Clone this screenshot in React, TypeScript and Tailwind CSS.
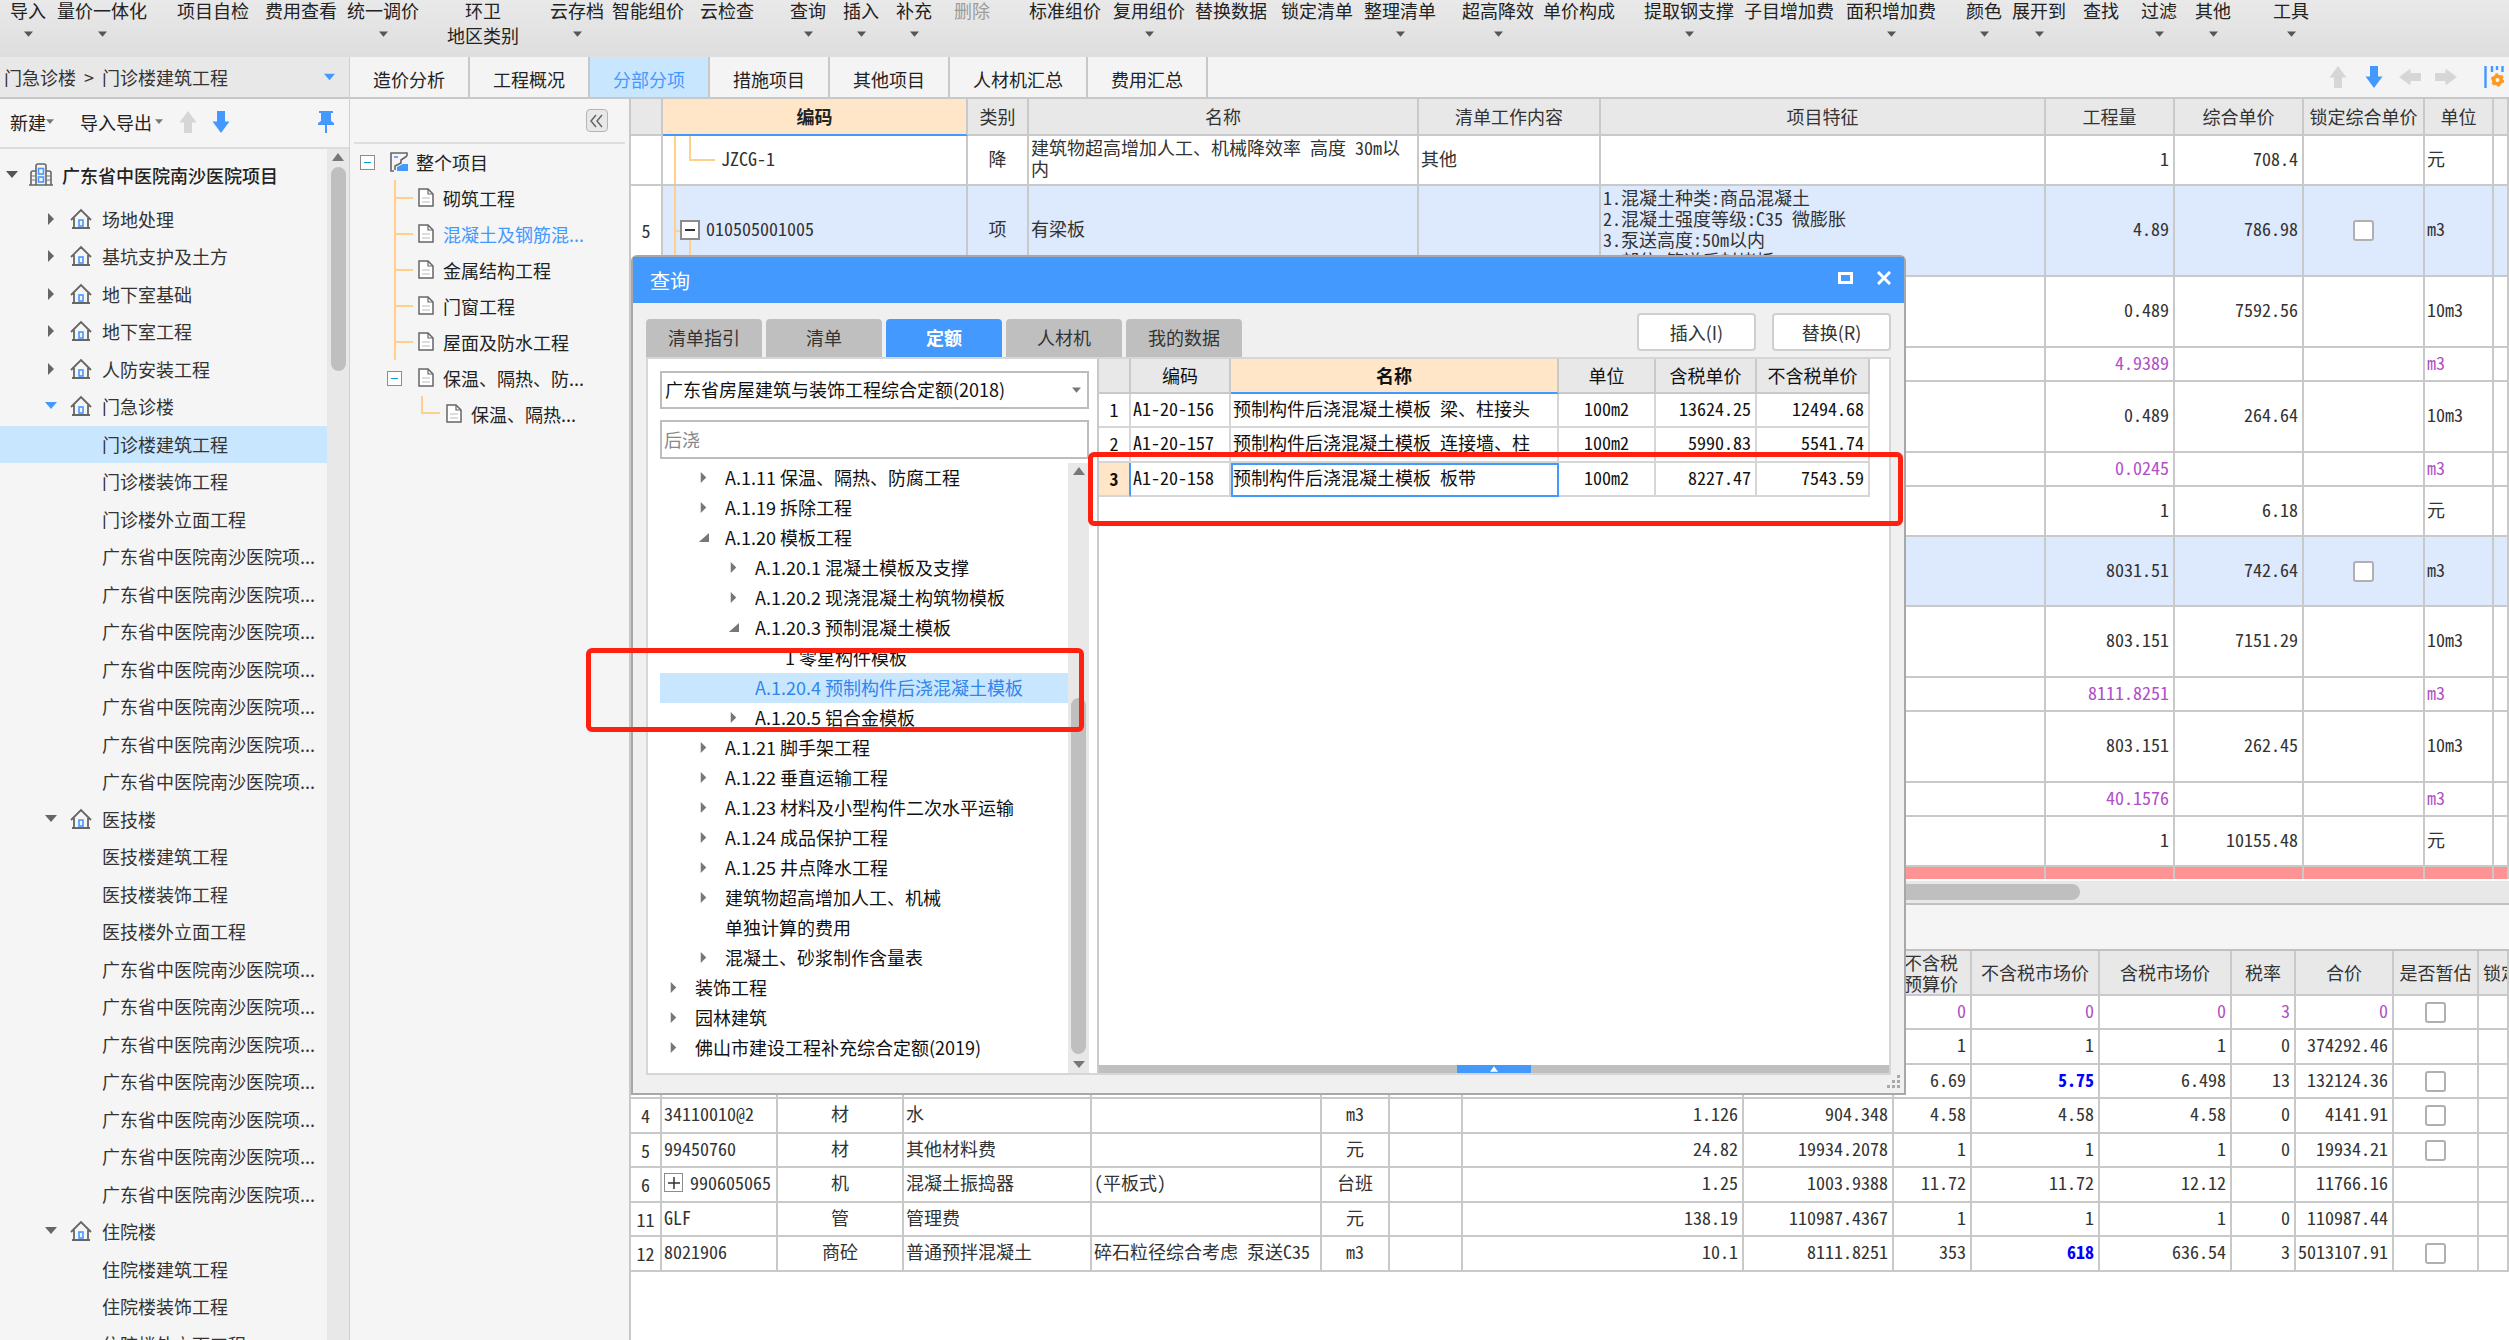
import type { ReactNode } from 'react';
import clsx from 'clsx';

// ---------- 图标 ----------

function Tri({ dir, className }: { dir: 'down' | 'right' | 'up' | 'corner'; className?: string }) {
  const points = {
    down: '0,2 12,2 6,9',
    up: '0,10 12,10 6,2',
    right: '3,0 9,6 3,12',
    corner: '12,1 12,11 1,11',
  }[dir];
  return (
    <svg viewBox="0 0 12 12" className={clsx('shrink-0 fill-current', className)} aria-hidden="true">
      <polygon points={points} />
    </svg>
  );
}

function Arrow({ className }: { className?: string }) {
  return (
    <svg viewBox="0 0 24 24" className={clsx('size-6 shrink-0 fill-current', className)} aria-hidden="true">
      <path d="M12 1 20.500 12.500H16V23H8V12.500H3.500Z" />
    </svg>
  );
}

function HouseIcon() {
  return (
    <svg viewBox="0 0 22 22" className="h-[22px] w-[22px] shrink-0" fill="none" aria-hidden="true">
      <path d="M1 12 11 2 21 12M4 10V20M18 10V20M2 20H20" stroke="#666" strokeWidth="1.8" />
      <rect x="9" y="12" width="4" height="6" stroke="#4499ff" strokeWidth="1.6" />
    </svg>
  );
}

function BuildingIcon() {
  return (
    <svg viewBox="0 0 24 24" className="size-6 shrink-0" fill="none" aria-hidden="true">
      <path d="M7 22V3Q7 1 9 1H15Q17 1 17 3V22M7 8H4Q2 8 2 10V22M17 8H20Q22 8 22 10V22M0 22H24" stroke="#666" strokeWidth="1.6" />
      <path d="M2 13H7M2 17H7M17 13H22M17 17H22" stroke="#777" strokeWidth="1.2" />
      <rect x="9.500" y="5.500" width="5" height="5.500" stroke="#4499ff" strokeWidth="1.6" />
      <rect x="9.500" y="14" width="5" height="5" stroke="#4499ff" strokeWidth="1.6" />
    </svg>
  );
}

function DocIcon() {
  return (
    <svg viewBox="0 0 16 20" className="h-5 w-4 shrink-0" fill="none" aria-hidden="true">
      <path d="M1 1H10L15 6V18H1Z" fill="#fff" stroke="#666" strokeWidth="1.5" />
      <path d="M10 1V6H15" stroke="#666" strokeWidth="1.2" />
      <path d="M4 10H12M4 14H12" stroke="#bbb" strokeWidth="1" />
    </svg>
  );
}

function ProjectIcon() {
  return (
    <svg viewBox="0 0 20 20" className="size-5 shrink-0" fill="none" aria-hidden="true">
      <path d="M18 4V1H2V19H5M18 4 12 8V11L6 14V18" stroke="#666" strokeWidth="1.6" />
      <path d="M5 5H9" stroke="#4499ff" strokeWidth="1.6" />
      <path d="M8 19V15L14 12H19V19Z" fill="#4499ff" />
    </svg>
  );
}

function PinIcon() {
  return (
    <svg viewBox="0 0 18 24" className="h-6 w-[18px] fill-[#4499ff]" aria-hidden="true">
      <path d="M2 1H16V3H14V11L17 13V15H10V23H8V15H1V13L4 11V3H2Z" />
    </svg>
  );
}

function ColumnSettingIcon() {
  return (
    <svg viewBox="0 0 20 24" className="h-6 w-5" aria-hidden="true">
      <path d="M1.500 1V23M8 1V7M13 1V5M18.500 1V7" stroke="#4499ff" strokeWidth="2.4" />
      <circle cx="13.500" cy="15" r="3.800" fill="none" stroke="#ff9a1f" strokeWidth="3.600" />
      <circle cx="13.500" cy="15" r="5.600" fill="none" stroke="#ff9a1f" strokeWidth="2.200" strokeDasharray="2.900 2.960" />
    </svg>
  );
}

function MinusBox() {
  return (
    <span className="flex h-[15px] w-[15px] shrink-0 items-center justify-center border border-[#8c8c8c] bg-white">
      <span className="h-px w-[7px] bg-[#0a9be0]" />
    </span>
  );
}

// ---------- 顶部工具栏 ----------

interface RibbonItem {
  label: string;
  gap: string;
  arrow?: boolean;
  second?: string;
  disabled?: boolean;
}

const ribbon: RibbonItem[] = [
  { label: '导入', gap: 'ml-[10px]', arrow: true },
  { label: '量价一体化', gap: 'ml-[11px]', arrow: true },
  { label: '项目自检', gap: 'ml-[30px]' },
  { label: '费用查看', gap: 'ml-4' },
  { label: '统一调价', gap: 'ml-[10px]', arrow: true },
  { label: '环卫', gap: 'ml-7', second: '地区类别' },
  { label: '云存档', gap: 'ml-[31px]', arrow: true },
  { label: '智能组价', gap: 'ml-2' },
  { label: '云检查', gap: 'ml-4' },
  { label: '查询', gap: 'ml-9', arrow: true },
  { label: '插入', gap: 'ml-[17px]', arrow: true },
  { label: '补充', gap: 'ml-[17px]', arrow: true },
  { label: '删除', gap: 'ml-[22px]', disabled: true },
  { label: '标准组价', gap: 'ml-[39px]' },
  { label: '复用组价', gap: 'ml-3', arrow: true },
  { label: '替换数据', gap: 'ml-[10px]' },
  { label: '锁定清单', gap: 'ml-[14px]' },
  { label: '整理清单', gap: 'ml-[11px]', arrow: true },
  { label: '超高降效', gap: 'ml-[26px]', arrow: true },
  { label: '单价构成', gap: 'ml-[9px]' },
  { label: '提取钢支撑', gap: 'ml-[29px]', arrow: true },
  { label: '子目增加费', gap: 'ml-[10px]' },
  { label: '面积增加费', gap: 'ml-3', arrow: true },
  { label: '颜色', gap: 'ml-[30px]', arrow: true },
  { label: '展开到', gap: 'ml-[10px]', arrow: true },
  { label: '查找', gap: 'ml-[17px]' },
  { label: '过滤', gap: 'ml-[22px]', arrow: true },
  { label: '其他', gap: 'ml-[18px]', arrow: true },
  { label: '工具', gap: 'ml-[42px]', arrow: true },
];

function Ribbon() {
  return (
    <header className="flex h-[57px] shrink-0 items-start overflow-hidden bg-linear-to-b from-[#e9e9e9] to-[#dedede]">
      {ribbon.map(({ label, gap, arrow, second, disabled }) => (
        <button
          key={label}
          type="button"
          disabled={disabled}
          className={clsx('flex shrink-0 flex-col items-center leading-5', gap, disabled && 'text-[#9c9c9c]')}
        >
          <span>{label}</span>
          {second && <span className="mt-[5px]">{second}</span>}
          {arrow && <Tri dir="down" className="mt-[10px] size-[9px] text-[#555]" />}
        </button>
      ))}
    </header>
  );
}

// ---------- 左侧项目树 ----------

interface ProjectNode {
  name: string;
  state?: 'closed' | 'open' | 'active';
  selected?: boolean;
}

const LONG_NAME = '广东省中医院南沙医院项...';
const longNodes: ProjectNode[] = Array.from({ length: 7 }, () => ({ name: LONG_NAME }));

const projectNodes: ProjectNode[] = [
  { name: '场地处理', state: 'closed' },
  { name: '基坑支护及土方', state: 'closed' },
  { name: '地下室基础', state: 'closed' },
  { name: '地下室工程', state: 'closed' },
  { name: '人防安装工程', state: 'closed' },
  { name: '门急诊楼', state: 'active' },
  { name: '门诊楼建筑工程', selected: true },
  { name: '门诊楼装饰工程' },
  { name: '门诊楼外立面工程' },
  ...longNodes,
  { name: '医技楼', state: 'open' },
  { name: '医技楼建筑工程' },
  { name: '医技楼装饰工程' },
  { name: '医技楼外立面工程' },
  ...longNodes,
  { name: '住院楼', state: 'open' },
  { name: '住院楼建筑工程' },
  { name: '住院楼装饰工程' },
  { name: '住院楼外立面工程' },
];

function ProjectSidebar() {
  return (
    <aside className="flex w-[350px] shrink-0 flex-col border-r border-[#d0d0d0] bg-[#f5f5f5]">
      <button
        type="button"
        className="flex h-[42px] shrink-0 items-center border-b-2 border-[#c8c8c8] bg-[#e8e8e8] pl-1 text-[#333]"
      >
        门急诊楼
        <span className="mx-2">&gt;</span>
        门诊楼建筑工程
        <Tri dir="down" className="mr-[14px] ml-auto size-[11px] text-[#4499ff]" />
      </button>
      <div className="flex h-[50px] shrink-0 items-center border-b-2 border-[#dcdcdc] pb-[2px] pl-[10px]">
        <button type="button" className="flex items-center">
          新建
          <Tri dir="down" className="size-2 text-[#777]" />
        </button>
        <button type="button" className="ml-[26px] flex items-center">
          导入导出
          <Tri dir="down" className="ml-[3px] size-2 text-[#777]" />
        </button>
        <button type="button" aria-label="上移" className="ml-[13px]">
          <Arrow className="text-[#d6d6d6]" />
        </button>
        <button type="button" aria-label="下移" className="ml-[9px]">
          <Arrow className="rotate-180 text-[#4499ff]" />
        </button>
        <button type="button" aria-label="固定" className="mr-[14px] ml-auto">
          <PinIcon />
        </button>
      </div>
      <div className="flex min-h-0 flex-1">
        <div className="min-w-0 flex-1 overflow-hidden text-[#333]">
          <div className="flex h-[52px] items-center pl-[6px] font-medium text-[#222]">
            <Tri dir="down" className="size-3 text-[#555]" />
            <span className="mr-[9px] ml-[11px]">
              <BuildingIcon />
            </span>
            广东省中医院南沙医院项目
          </div>
          <ul>
            {projectNodes.map(({ name, state, selected }, i) => (
              <li
                key={i}
                className={clsx('flex h-[37px] items-center pb-[2px] even:h-[38px]', selected && 'bg-[#c9e6ff]')}
              >
                <span className="flex w-[102px] shrink-0 items-center pl-[45px]">
                  {state && (
                    <>
                      <Tri
                        dir={state === 'closed' ? 'right' : 'down'}
                        className={clsx('size-3', state === 'active' ? 'text-[#4499ff]' : 'text-[#666]')}
                      />
                      <span className="ml-[13px]">
                        <HouseIcon />
                      </span>
                    </>
                  )}
                </span>
                <button type="button" className="whitespace-nowrap">
                  {name}
                </button>
              </li>
            ))}
          </ul>
        </div>
        <div className="flex w-[22px] flex-col items-center bg-[#e8e8e8] pt-[2px]">
          <Tri dir="up" className="size-3 text-[#777]" />
          <span className="mt-1 h-[204px] w-[15px] rounded-full bg-[#bfbfbf]" />
        </div>
      </div>
    </aside>
  );
}

// ---------- 分部树 ----------

const sectionNodes = [
  { name: '砌筑工程' },
  { name: '混凝土及钢筋混...', active: true },
  { name: '金属结构工程' },
  { name: '门窗工程' },
  { name: '屋面及防水工程' },
];

function SectionTree() {
  return (
    <nav className="flex w-[279px] shrink-0 flex-col bg-[#f5f5f5]">
      <div className="mx-1 flex h-[45px] items-start justify-end border-b-2 border-[#dedede] pt-[10px] pr-[17px]">
        <button
          type="button"
          aria-label="收起"
          className="flex h-[23px] w-[22px] items-center justify-center rounded-sm border border-[#b5b5b5] bg-[#e8e8e8]"
        >
          <svg viewBox="0 0 14 14" className="size-[14px]" fill="none" stroke="#666" strokeWidth="1.5">
            <path d="M6 1 1 7 6 13M12 1 7 7 12 13" />
          </svg>
        </button>
      </div>
      <div className="flex h-9 items-center pl-[10px]">
        <MinusBox />
        <span className="mr-[7px] ml-[14px]">
          <ProjectIcon />
        </span>
        整个项目
      </div>
      <ul className="ml-[44px] border-l-2 border-[#ffd08c]">
        {sectionNodes.map(({ name, active }) => (
          <li key={name} className="flex h-9 items-center">
            <span className="mr-[5px] h-[2px] w-[17px] bg-[#ffd08c]" />
            <DocIcon />
            <button type="button" className={clsx('ml-[9px]', active && 'text-[#4499ff]')}>
              {name}
            </button>
          </li>
        ))}
      </ul>
      <div className="flex h-9 items-center pl-[37px]">
        <MinusBox />
        <span className="mr-[9px] ml-4">
          <DocIcon />
        </span>
        保温、隔热、防...
      </div>
      <div className="flex h-9 items-center pl-[71px]">
        <span className="mr-[6px] mb-[18px] h-[18px] w-[19px] border-b-2 border-l-2 border-[#ffd08c]" />
        <DocIcon />
        <span className="ml-[9px]">保温、隔热...</span>
      </div>
    </nav>
  );
}

// ---------- 表格 ----------

const cell = 'border-r-2 border-b-2 border-[#c9c9c9]';
const textCell = 'border-r-2 border-b-2 border-[#c9c9c9] pb-1';
const mono = "font-['Noto_Sans_Mono_CJK_SC','Noto_Sans_CJK_SC',monospace]";

function Check({ label }: { label: string }) {
  return (
    <input
      type="checkbox"
      aria-label={label}
      className="mx-auto block size-[21px] appearance-none rounded-[3px] border-2 border-[#b0b0b0] bg-white"
    />
  );
}

const mainCols = [
  'w-[32px]', 'w-[305px]', 'w-[61px]', 'w-[390px]', 'w-[182px]', 'w-[445px]',
  'w-[129px]', 'w-[129px]', 'w-[121px]', 'w-[69px]', '',
];

interface BillRow {
  h: string;
  no?: string;
  code?: ReactNode;
  kind?: string;
  name?: string;
  work?: string;
  feature?: string[];
  qty: string;
  price?: string;
  lock?: boolean;
  unit: string;
  tone?: 'blue' | 'purple';
  current?: boolean;
}

const firstCode = (
  <div className="flex h-full pl-[11px]">
    <span className="h-full w-[2px] bg-[#ffd08c]" />
    <span className="ml-[13px] h-[25px] w-[26px] border-b-2 border-l-2 border-[#ffd08c]" />
    <span className="ml-[6px] self-center pb-1">JZCG-1</span>
  </div>
);

const itemCode = (
  <div className="flex h-full pl-[11px]">
    <span className="h-full w-[2px] bg-[#ffd08c]" />
    <span className="h-[2px] w-1 self-center bg-[#ffd08c]" />
    <span className="flex h-full flex-col items-center">
      <span className="mt-[34px] flex size-5 items-center justify-center border-2 border-[#8c8c8c] bg-white">
        <span className="h-[2px] w-[10px] bg-[#333]" />
      </span>
      <span className="w-[2px] flex-1 bg-[#ffd08c]" />
    </span>
    <span className="ml-[6px] self-center pb-1">010505001005</span>
  </div>
);

const billRows: BillRow[] = [
  {
    h: 'h-[50px]', code: firstCode, kind: '降', name: '建筑物超高增加人工、机械降效率 高度 30m以内',
    work: '其他', qty: '1', price: '708.4', unit: '元',
  },
  {
    h: 'h-[91px]', no: '5', code: itemCode, kind: '项', name: '有梁板',
    feature: ['1.混凝土种类:商品混凝土', '2.混凝土强度等级:C35 微膨胀', '3.泵送高度:50m以内', '4.部位:管道后封堵板'],
    qty: '4.89', price: '786.98', lock: true, unit: 'm3', tone: 'blue',
  },
  { h: 'h-[71px]', qty: '0.489', price: '7592.56', unit: '10m3' },
  { h: 'h-[34px]', qty: '4.9389', unit: 'm3', tone: 'purple' },
  { h: 'h-[71px]', qty: '0.489', price: '264.64', unit: '10m3' },
  { h: 'h-[34px]', qty: '0.0245', unit: 'm3', tone: 'purple' },
  { h: 'h-[50px]', qty: '1', price: '6.18', unit: '元' },
  { h: 'h-[70px]', qty: '8031.51', price: '742.64', lock: true, unit: 'm3', tone: 'blue' },
  { h: 'h-[71px]', qty: '803.151', price: '7151.29', unit: '10m3', current: true },
  { h: 'h-[34px]', qty: '8111.8251', unit: 'm3', tone: 'purple' },
  { h: 'h-[71px]', qty: '803.151', price: '262.45', unit: '10m3' },
  { h: 'h-[34px]', qty: '40.1576', unit: 'm3', tone: 'purple' },
  { h: 'h-[50px]', qty: '1', price: '10155.48', unit: '元' },
];

function BillTable() {
  return (
    <table className={clsx('w-full table-fixed border-separate border-spacing-0 leading-[21px] text-[#333]', mono)}>
      <colgroup>
        {mainCols.map((w, i) => (
          <col key={i} className={w} />
        ))}
      </colgroup>
      <thead>
        <tr className="h-[37px] bg-[#e8e8e8]">
          <th className={cell} />
          <th className="border-r-2 border-b-2 border-r-[#c9c9c9] border-b-[#4499ff] bg-[#ffe6c8] font-bold text-[#222]">编码</th>
          {['类别', '名称', '清单工作内容', '项目特征', '工程量', '综合单价', '锁定综合单价', '单位'].map((t) => (
            <th key={t} className={clsx(cell, 'font-normal whitespace-nowrap')}>{t}</th>
          ))}
          <th className={cell} />
        </tr>
      </thead>
      <tbody>
        {billRows.map((r, i) => (
          <tr
            key={i}
            className={clsx(r.h, r.tone === 'blue' ? 'bg-[#dde9fd]' : 'bg-white', r.tone === 'purple' && 'text-[#b04fc8]')}
          >
            <td className={clsx(cell, 'text-center', r.current ? 'bg-[#ffe6c8]' : 'bg-white')}>{r.no}</td>
            <td className={clsx(cell, 'h-px')}>{r.code}</td>
            <td className={clsx(textCell, 'text-center')}>{r.kind}</td>
            <td className={clsx(textCell, 'px-[2px]')}>{r.name}</td>
            <td className={clsx(textCell, 'px-[2px]')}>{r.work}</td>
            <td className={clsx(textCell, 'px-[2px]')}>
              {r.feature?.map((f) => <p key={f}>{f}</p>)}
            </td>
            <td className={clsx(textCell, 'pr-1 text-right')}>{r.qty}</td>
            <td className={clsx(textCell, 'pr-1 text-right')}>{r.price}</td>
            <td className={cell}>{r.lock && <Check label="锁定综合单价" />}</td>
            <td className={clsx(textCell, 'pl-[2px]')}>{r.unit}</td>
            <td className={cell} />
          </tr>
        ))}
        <tr className="h-3 bg-[#ff9292]">
          {mainCols.map((_, i) => (
            <td key={i} className="border-r-2 border-[#c9c9c9]" />
          ))}
        </tr>
      </tbody>
    </table>
  );
}

const detailCols = [
  'w-[31px]', 'w-[116px]', 'w-[126px]', 'w-[188px]', 'w-[230px]', 'w-[68px]', 'w-[73px]', 'w-[281px]',
  'w-[150px]', 'w-[78px]', 'w-[128px]', 'w-[132px]', 'w-[64px]', 'w-[98px]', 'w-[85px]', '',
];

interface DetailRow {
  no: string;
  code: string;
  kind: string;
  name: string;
  spec?: string;
  unit: string;
  nums: string[]; // 含量、数量、不含税预算价、不含税市场价、含税市场价、税率、合价
  check?: boolean;
  edited?: boolean;
  purple?: boolean;
  plus?: boolean;
}

const detailRows: DetailRow[] = [
  { no: '', code: '', kind: '', name: '', unit: '', nums: ['', '', '0', '0', '0', '3', '0'], check: true, purple: true },
  { no: '', code: '', kind: '', name: '', unit: '', nums: ['', '', '1', '1', '1', '0', '374292.46'] },
  { no: '', code: '', kind: '', name: '', unit: '', nums: ['', '', '6.69', '5.75', '6.498', '13', '132124.36'], check: true, edited: true },
  { no: '4', code: '34110010@2', kind: '材', name: '水', unit: 'm3', nums: ['1.126', '904.348', '4.58', '4.58', '4.58', '0', '4141.91'], check: true },
  { no: '5', code: '99450760', kind: '材', name: '其他材料费', unit: '元', nums: ['24.82', '19934.2078', '1', '1', '1', '0', '19934.21'], check: true },
  { no: '6', code: '990605065', kind: '机', name: '混凝土振捣器', spec: '(平板式)', unit: '台班', nums: ['1.25', '1003.9388', '11.72', '11.72', '12.12', '', '11766.16'], plus: true },
  { no: '11', code: 'GLF', kind: '管', name: '管理费', unit: '元', nums: ['138.19', '110987.4367', '1', '1', '1', '0', '110987.44'] },
  { no: '12', code: '8021906', kind: '商砼', name: '普通预拌混凝土', spec: '碎石粒径综合考虑 泵送C35', unit: 'm3', nums: ['10.1', '8111.8251', '353', '618', '636.54', '3', '5013107.91'], check: true, edited: true },
];

function DetailTable() {
  return (
    <table className={clsx('w-full table-fixed border-separate border-spacing-0 leading-[21px] whitespace-nowrap text-[#333]', mono)}>
      <colgroup>
        {detailCols.map((w, i) => (
          <col key={i} className={w} />
        ))}
      </colgroup>
      <thead>
        <tr className="h-[45px] bg-[#e8e8e8]">
          {detailCols.slice(0, 9).map((_, i) => (
            <th key={i} className={cell} />
          ))}
          <th className={clsx(cell, 'pr-[2px] font-normal')}>不含税<br />预算价</th>
          {['不含税市场价', '含税市场价', '税率', '合价', '是否暂估'].map((t) => (
            <th key={t} className={clsx(cell, 'font-normal')}>{t}</th>
          ))}
          <th className={clsx(cell, 'overflow-hidden pl-1 text-left font-normal')}>锁定</th>
        </tr>
      </thead>
      <tbody>
        {detailRows.map((r, i) => (
          <tr key={i} className={clsx('h-[34px] bg-white even:h-[35px]', r.purple && 'text-[#b04fc8]')}>
            <td className={clsx(cell, 'text-center', i === 0 && 'bg-[#ffe6c8]')}>{r.no}</td>
            <td className={clsx(textCell, 'pl-[2px]')}>
              <span className="flex items-center">
                {r.plus && (
                  <button
                    type="button"
                    aria-label="展开"
                    className="mr-[7px] flex size-[19px] items-center justify-center border border-[#8c8c8c]"
                  >
                    <svg viewBox="0 0 12 12" className="size-3" stroke="#333" strokeWidth="1.5">
                      <path d="M0 6H12M6 0V12" />
                    </svg>
                  </button>
                )}
                {r.code}
              </span>
            </td>
            <td className={clsx(textCell, 'text-center')}>{r.kind}</td>
            <td className={clsx(textCell, 'pl-[2px]')}>{r.name}</td>
            <td className={clsx(textCell, 'pl-[2px]')}>{r.spec}</td>
            <td className={clsx(textCell, 'text-center')}>{r.unit}</td>
            <td className={cell} />
            {r.nums.map((n, j) => (
              <td
                key={j}
                className={clsx(textCell, 'pr-1 text-right', r.edited && j === 3 && 'font-bold text-[#0000ff]')}
              >
                {n}
              </td>
            ))}
            <td className={cell}>{r.check && <Check label="是否暂估" />}</td>
            <td className={cell} />
          </tr>
        ))}
      </tbody>
    </table>
  );
}

// ---------- 查询窗口 ----------

interface QuotaNode {
  name: string;
  level: 0 | 1 | 2 | 3;
  state?: 'open' | 'closed';
  selected?: boolean;
}

const quotaNodes: QuotaNode[] = [
  { name: 'A.1.11 保温、隔热、防腐工程', level: 1, state: 'closed' },
  { name: 'A.1.19 拆除工程', level: 1, state: 'closed' },
  { name: 'A.1.20 模板工程', level: 1, state: 'open' },
  { name: 'A.1.20.1 混凝土模板及支撑', level: 2, state: 'closed' },
  { name: 'A.1.20.2 现浇混凝土构筑物模板', level: 2, state: 'closed' },
  { name: 'A.1.20.3 预制混凝土模板', level: 2, state: 'open' },
  { name: '1 零星构件模板', level: 3 },
  { name: 'A.1.20.4 预制构件后浇混凝土模板', level: 2, selected: true },
  { name: 'A.1.20.5 铝合金模板', level: 2, state: 'closed' },
  { name: 'A.1.21 脚手架工程', level: 1, state: 'closed' },
  { name: 'A.1.22 垂直运输工程', level: 1, state: 'closed' },
  { name: 'A.1.23 材料及小型构件二次水平运输', level: 1, state: 'closed' },
  { name: 'A.1.24 成品保护工程', level: 1, state: 'closed' },
  { name: 'A.1.25 井点降水工程', level: 1, state: 'closed' },
  { name: '建筑物超高增加人工、机械', level: 1, state: 'closed' },
  { name: '单独计算的费用', level: 1 },
  { name: '混凝土、砂浆制作含量表', level: 1, state: 'closed' },
  { name: '装饰工程', level: 0, state: 'closed' },
  { name: '园林建筑', level: 0, state: 'closed' },
  { name: '佛山市建设工程补充综合定额(2019)', level: 0, state: 'closed' },
];

const quotaIndent = ['pl-2', 'pl-[38px]', 'pl-[68px]', 'pl-[98px]'];

const quotaRows = [
  { code: 'A1-20-156', name: '预制构件后浇混凝土模板 梁、柱接头', unit: '100m2', tax: '13624.25', net: '12494.68' },
  { code: 'A1-20-157', name: '预制构件后浇混凝土模板 连接墙、柱', unit: '100m2', tax: '5990.83', net: '5541.74' },
  { code: 'A1-20-158', name: '预制构件后浇混凝土模板 板带', unit: '100m2', tax: '8227.47', net: '7543.59' },
];

function QuotaTable() {
  const line = 'border-r-2 border-b-2 border-[#d6d6d6] pb-1';
  return (
    <table className={clsx('w-[771px] table-fixed border-separate border-spacing-0 leading-[21px] whitespace-nowrap', mono)}>
      <colgroup>
        <col className="w-[32px]" />
        <col className="w-[100px]" />
        <col className="w-[328px]" />
        <col className="w-[97px]" />
        <col className="w-[101px]" />
        <col className="w-[113px]" />
      </colgroup>
      <thead>
        <tr className="h-[35px] bg-[#e8e8e8]">
          <th className={cell} />
          <th className={clsx(cell, 'font-medium')}>编码</th>
          <th className="border-r-2 border-b-2 border-r-[#c9c9c9] border-b-[#4499ff] bg-[#ffe6c8] font-bold">名称</th>
          {['单位', '含税单价', '不含税单价'].map((t) => (
            <th key={t} className={clsx(cell, 'font-medium')}>{t}</th>
          ))}
        </tr>
      </thead>
      <tbody>
        {quotaRows.map((r, i) => {
          const current = i === 2;
          return (
            <tr key={r.code} className="h-[34px] even:h-[35px]">
              <td
                className={clsx(
                  'border-r-2 border-b-2 border-b-[#d6d6d6] pb-[2px] text-center',
                  current ? 'border-r-[#4499ff] bg-[#ffe6c8] font-bold' : 'border-r-[#d6d6d6]',
                )}
              >
                {i + 1}
              </td>
              <td className={clsx(line, 'pl-[2px]')}>{r.code}</td>
              <td className={current ? 'border-2 border-[#4499ff] pb-[6px]' : clsx(line, 'pl-[2px]')}>{r.name}</td>
              <td className={clsx(line, 'text-center')}>{r.unit}</td>
              <td className={clsx(line, 'pr-1 text-right')}>{r.tax}</td>
              <td className={clsx(line, 'pr-1 text-right')}>{r.net}</td>
            </tr>
          );
        })}
      </tbody>
    </table>
  );
}

function QueryDialog() {
  return (
    <section
      role="dialog"
      aria-label="查询"
      className="absolute top-[255px] left-[631px] flex w-[1275px] flex-col rounded-t-md border-2 border-[#a8a8a8] bg-[#f0f0f0] text-[#111]"
    >
      <div className="flex h-[46px] items-center bg-[#4499ff] pr-[13px] pl-[17px] text-white">
        <h2 className="pt-[2px] text-[20px]">查询</h2>
        <button type="button" aria-label="最大化" className="mr-6 mb-1 ml-auto h-3 w-[15px] border-[3px] border-white" />
        <button type="button" aria-label="关闭" className="mb-1">
          <svg viewBox="0 0 14 14" className="size-[14px]" stroke="#fff" strokeWidth="3">
            <path d="M1 1 13 13M13 1 1 13" />
          </svg>
        </button>
      </div>

      <div className="flex h-[54px] items-end gap-1 px-[13px]">
        {['清单指引', '清单', '定额', '人材机', '我的数据'].map((t) => (
          <button
            key={t}
            type="button"
            className={clsx(
              'h-[38px] w-[116px] rounded-t-sm pb-[2px]',
              t === '定额' ? 'bg-[#4499ff] font-bold text-white' : 'bg-[#bfbfbf] text-[#333]',
            )}
          >
            {t}
          </button>
        ))}
        <div className="mb-[6px] ml-auto flex gap-4">
          <button type="button" className="h-[38px] w-[119px] rounded-sm border-2 border-[#cfcfcf] bg-white text-[#333]">
            插入(I)
          </button>
          <button type="button" className="h-[38px] w-[119px] rounded-sm border-2 border-[#cfcfcf] bg-white text-[#333]">
            替换(R)
          </button>
        </div>
      </div>

      <div className="mx-[13px] flex border-2 border-[#d6d6d6] bg-white">
        <div className="flex w-[449px] shrink-0 flex-col pt-3 pr-2 pl-3">
          <div className="relative">
            <select
              aria-label="定额库"
              className="h-[38px] w-full appearance-none border-2 border-[#bdbdbd] bg-white pb-[2px] pl-[3px]"
            >
              <option>广东省房屋建筑与装饰工程综合定额(2018)</option>
            </select>
            <Tri dir="down" className="pointer-events-none absolute top-[15px] right-2 size-[9px] text-[#777]" />
          </div>
          <input
            aria-label="搜索定额"
            defaultValue="后浇"
            className="mt-[11px] h-[39px] w-full border-2 border-[#bdbdbd] pb-[2px] pl-[2px] text-[#888] outline-none"
          />
          <div className="mt-1 flex">
            <ul className="min-w-0 flex-1">
              {quotaNodes.map(({ name, level, state, selected }) => (
                <li
                  key={name}
                  className={clsx(
                    'flex h-[30px] items-center pb-[2px] whitespace-nowrap',
                    quotaIndent[level],
                    selected && 'bg-[#c9e6ff] text-[#2f86ec]',
                  )}
                >
                  <span className="flex w-[27px] shrink-0 items-center">
                    {state && (
                      <Tri dir={state === 'open' ? 'corner' : 'right'} className="size-[11px] text-[#777]" />
                    )}
                  </span>
                  <button type="button">{name}</button>
                </li>
              ))}
            </ul>
            <div className="flex h-[610px] w-[21px] flex-col items-center bg-[#e8e8e8] pt-[2px] pb-[2px]">
              <Tri dir="up" className="size-3 text-[#777]" />
              <span className="mt-auto h-[356px] w-[15px] rounded-full bg-[#bfbfbf]" />
              <Tri dir="down" className="mt-[5px] size-3 text-[#777]" />
            </div>
          </div>
        </div>
        <div className="flex min-w-0 flex-1 flex-col border-l-2 border-[#c9c9c9]">
          <QuotaTable />
          <div className="mt-auto flex h-2 justify-center bg-[#bfbfbf]">
            <button type="button" aria-label="展开明细" className="flex h-2 w-[74px] items-center justify-center bg-[#4499ff]">
              <Tri dir="up" className="size-2 text-white" />
            </button>
          </div>
        </div>
      </div>

      <div className="flex h-[18px] items-start justify-end pr-1">
        <svg viewBox="0 0 13 13" className="size-[13px]" fill="#aaa" aria-hidden="true">
          <path d="M10 0h3v3h-3zM5 5h3v3h-3zM10 5h3v3h-3zM0 10h3v3h-3zM5 10h3v3h-3zM10 10h3v3h-3z" />
        </svg>
      </div>
    </section>
  );
}

// ---------- 页面 ----------

const tabs = ['造价分析', '工程概况', '分部分项', '措施项目', '其他项目', '人材机汇总', '费用汇总'];

export default function App() {
  return (
    <div className="relative flex h-screen flex-col overflow-hidden bg-white font-['Noto_Sans_CJK_SC',sans-serif] text-[18px] leading-6 text-[#222]">
      <Ribbon />
      <div className="flex min-h-0 flex-1">
        <ProjectSidebar />
        <div className="flex min-w-0 flex-1 flex-col">
          <div className="flex h-[42px] shrink-0 border-b-2 border-[#c8c8c8] bg-[#f4f4f4]">
            {tabs.map((t) => (
              <button
                key={t}
                type="button"
                className={clsx(
                  'border-r-2 border-[#c8c8c8] px-[23px] pt-1',
                  t === '分部分项' && 'bg-[#c9e6ff] text-[#4499ff]',
                )}
              >
                {t}
              </button>
            ))}
            <div className="mr-[5px] ml-auto flex items-center gap-3">
              <button type="button" aria-label="上移"><Arrow className="text-[#d6d6d6]" /></button>
              <button type="button" aria-label="下移"><Arrow className="rotate-180 text-[#4499ff]" /></button>
              <button type="button" aria-label="左移"><Arrow className="-rotate-90 text-[#d6d6d6]" /></button>
              <button type="button" aria-label="右移"><Arrow className="rotate-90 text-[#d6d6d6]" /></button>
              <button type="button" aria-label="列设置" className="ml-[14px]"><ColumnSettingIcon /></button>
            </div>
          </div>
          <div className="flex min-h-0 flex-1">
            <SectionTree />
            <main className="min-w-0 flex-1 overflow-hidden border-l-2 border-[#c9c9c9]">
              <BillTable />
              <div className="mt-[2px] flex h-[22px] items-center bg-[#e8e8e8]">
                <span className="h-4 w-[1449px] rounded-full bg-[#bfbfbf]" />
              </div>
              <div className="h-[48px] border-y-2 border-[#c0c0c0] bg-[#f5f5f5]" />
              <DetailTable />
            </main>
          </div>
        </div>
      </div>

      <QueryDialog />

      {/* 标注框 */}
      <div className="pointer-events-none absolute top-[648px] left-[586px] h-[84px] w-[498px] rounded-md border-[5px] border-[#ff2010]" />
      <div className="pointer-events-none absolute top-[452px] left-[1088px] h-[74px] w-[815px] rounded-md border-[5px] border-[#ff2010]" />
    </div>
  );
}
